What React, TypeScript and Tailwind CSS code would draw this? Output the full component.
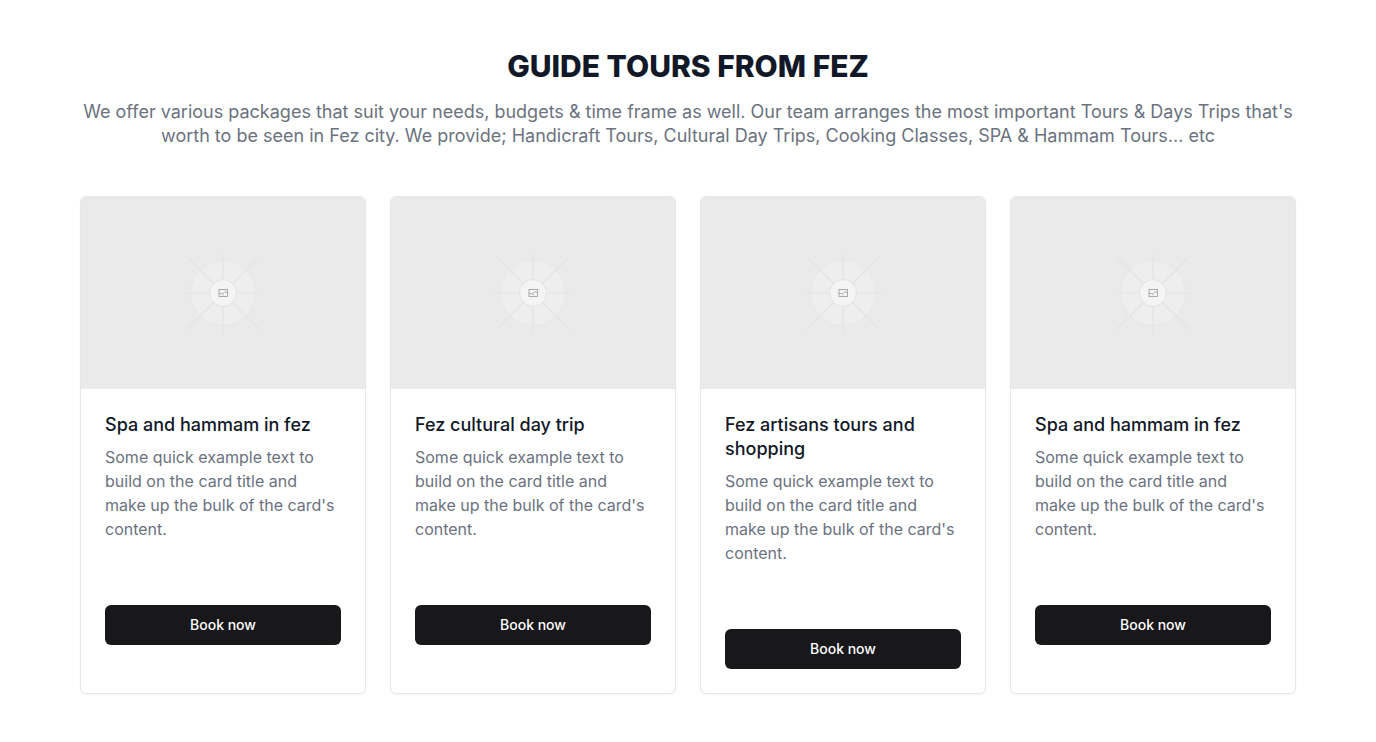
const description =
  "Some quick example text to build on the card title and make up the bulk of the card's content.";

const tours = [
  { id: 1, title: 'Spa and hammam in fez' },
  { id: 2, title: 'Fez cultural day trip' },
  { id: 3, title: 'Fez artisans tours and shopping' },
  { id: 4, title: 'Spa and hammam in fez' },
];

function Placeholder() {
  return (
    <div className="flex h-48 items-center justify-center bg-[#eaeaea]">
      <svg className="size-24" viewBox="0 0 96 96" fill="none" aria-hidden="true">
        <circle cx="48" cy="48" r="32.5" fill="#eeeeee" stroke="#e8e8e8" />
        <g stroke="#e3e3e3" strokeWidth="1.2">
          <path d="M48 10V86M10 48H86" />
          <path d="M13 13L83 83M83 13L13 83" />
        </g>
        <g stroke="#e7e7e7" strokeWidth="1">
          <path d="M48 4V10M48 86V92M6 48H10M86 48H90" />
          <path d="M9 9L13 13M83 83L87 87M87 9L83 13M13 83L9 87" />
        </g>
        <circle cx="48" cy="48" r="13.5" fill="#f4f4f4" stroke="#e2e2e2" />
        <g stroke="#a3a3a3" strokeWidth=".9">
          <rect x="44" y="44.5" width="8.5" height="7" />
          <path d="M44 48.5H46.5L48.5 50M47.5 49L50 46.5L52.5 48" />
        </g>
      </svg>
    </div>
  );
}

function TourCard({ title }: { title: string }) {
  return (
    <article className="overflow-hidden rounded-md border border-gray-200 bg-white shadow-xs">
      <Placeholder />
      <div className="p-6">
        <h2 className="text-lg leading-6 font-medium text-[#111827]">{title}</h2>
        <p className="mt-2 text-base text-[#6b7280]">{description}</p>
        <button
          type="button"
          className="mt-16 h-10 w-full rounded-md bg-[#18181a] text-sm font-medium text-white hover:bg-zinc-800"
        >
          Book now
        </button>
      </div>
    </article>
  );
}

export default function App() {
  return (
    <main className="bg-white px-20 py-12 font-['Inter',sans-serif]">
      <header className="text-center">
        <h1 className="text-3xl leading-9 font-extrabold text-[#111827]">
          GUIDE TOURS FROM FEZ
        </h1>
        <p className="mt-4 text-lg leading-6 text-[#6b7280]">
          We offer various packages that suit your needs, budgets &amp; time frame as well. Our team
          arranges the most important Tours &amp; Days Trips that's worth to be seen in Fez city. We
          provide; Handicraft Tours, Cultural Day Trips, Cooking Classes, SPA &amp; Hammam Tours...
          etc
        </p>
      </header>
      <section className="mt-12 grid grid-cols-4 gap-6" aria-label="Tours">
        {tours.map((tour) => (
          <TourCard key={tour.id} title={tour.title} />
        ))}
      </section>
    </main>
  );
}
